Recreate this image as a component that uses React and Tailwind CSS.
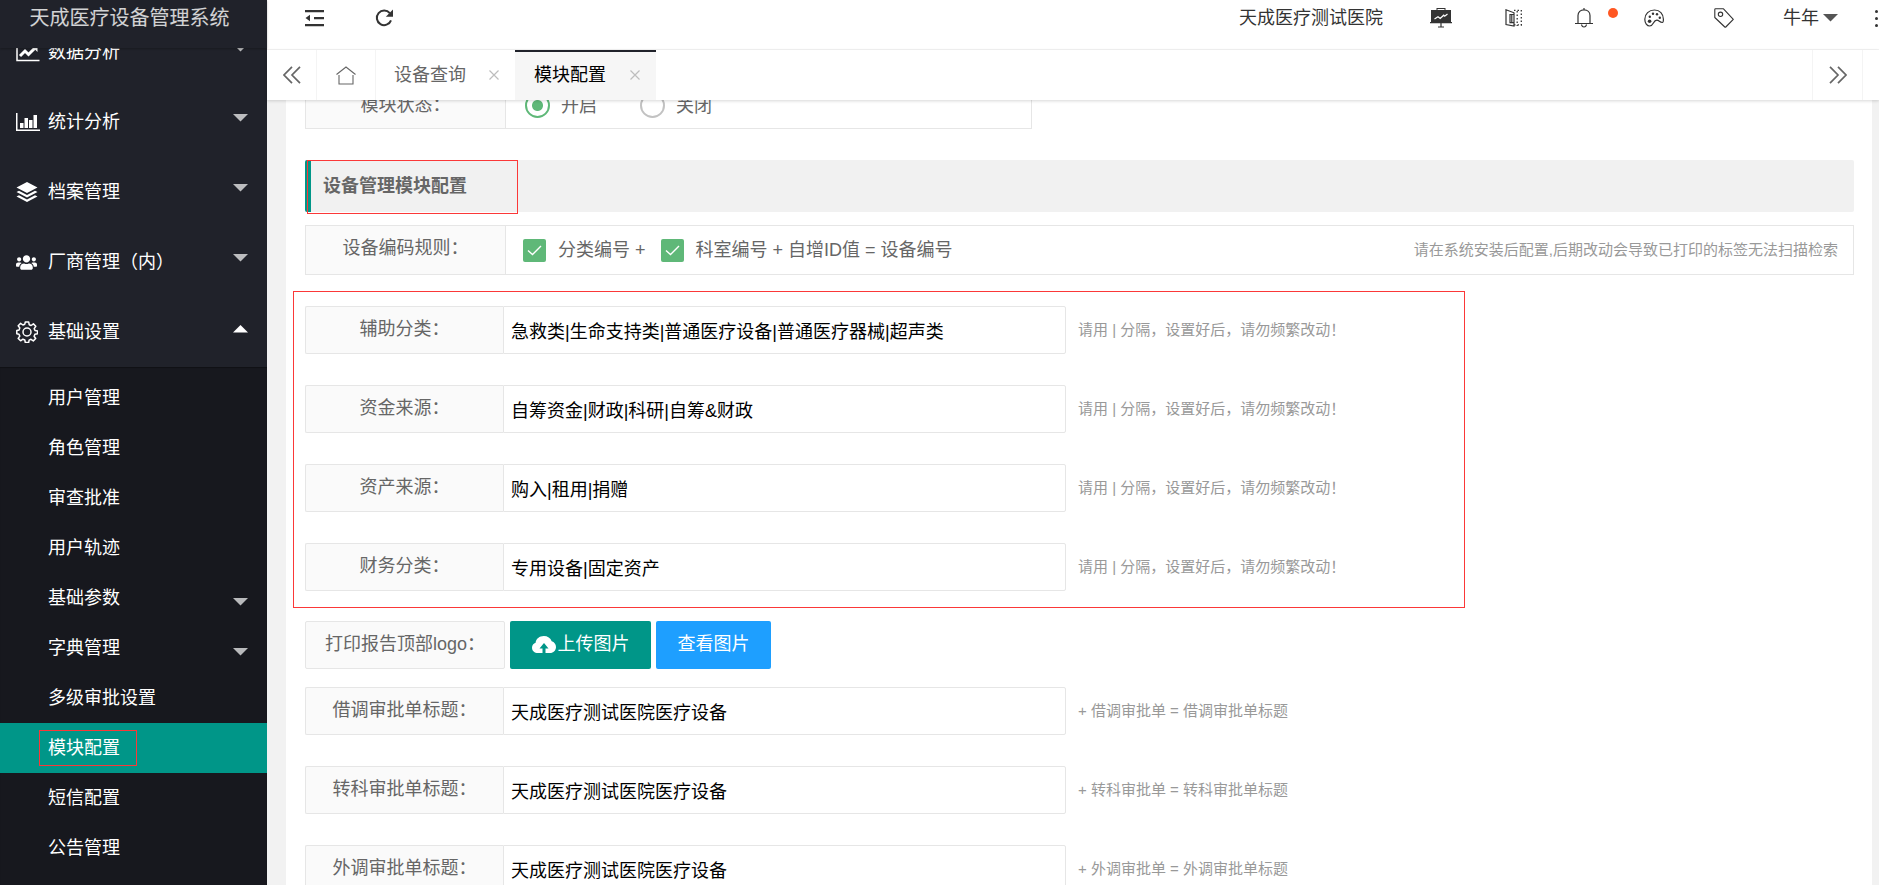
import { FaUsers } from "react-icons/fa";

const groups = ["数据分析", "统计分析", "档案管理", "厂商管理（内）", "基础设置"];

const subItems = [
  { name: "用户管理" },
  { name: "角色管理" },
  { name: "审查批准" },
  { name: "用户轨迹" },
  { name: "基础参数", more: true },
  { name: "字典管理", more: true },
  { name: "多级审批设置" },
  { name: "模块配置", active: true },
  { name: "短信配置" },
  { name: "公告管理" },
];

const splitHint = "请用 | 分隔，设置好后，请勿频繁改动！";
const categoryFields = [
  { id: "assist", label: "辅助分类：", value: "急救类|生命支持类|普通医疗设备|普通医疗器械|超声类" },
  { id: "fund", label: "资金来源：", value: "自筹资金|财政|科研|自筹&财政" },
  { id: "asset", label: "资产来源：", value: "购入|租用|捐赠" },
  { id: "finance", label: "财务分类：", value: "专用设备|固定资产" },
];
const titleFields = [
  { id: "lend", label: "借调审批单标题：", value: "天成医疗测试医院医疗设备", hint: "+ 借调审批单 = 借调审批单标题" },
  { id: "transfer", label: "转科审批单标题：", value: "天成医疗测试医院医疗设备", hint: "+ 转科审批单 = 转科审批单标题" },
  { id: "outer", label: "外调审批单标题：", value: "天成医疗测试医院医疗设备", hint: "+ 外调审批单 = 外调审批单标题" },
];

function GroupIcon({ index }) {
  if (index === 0)
    return (
      <svg width="24" height="20" viewBox="0 0 24 20" fill="none" stroke="currentColor">
        <path d="M1 1v17.500h22.500" strokeWidth="1.500" />
        <path d="M4 14l5-5 3.500 3.500L19 6" strokeWidth="3" />
        <path d="M15 3.500h6.500V10z" fill="currentColor" stroke="none" />
      </svg>
    );
  if (index === 1)
    return (
      <svg width="24" height="20" viewBox="0 0 24 20" fill="currentColor">
        <path d="M0 1h1.500v16.500H24V19H0zM4 11h3.500v5H4zM8.500 6h3.500v10H8.500zM13 8h3.500v8H13zM17.500 3H21v13h-3.500z" />
      </svg>
    );
  if (index === 2)
    return (
      <svg width="22" height="20" viewBox="0 0 22 20" fill="currentColor">
        <path d="M11 0l10.500 5.500L11 11 .5 5.500zM3 8.700l8 4.200 8-4.200 2.500 1.300L11 15.500.5 10zM3 13.200l8 4.200 8-4.200 2.500 1.300L11 20 .5 14.500z" />
      </svg>
    );
  if (index === 3) return <FaUsers size={21} />;
  return (
    <svg width="22" height="22" viewBox="0 0 22 22" fill="none" stroke="currentColor" strokeWidth="1.500">
      <circle cx="11" cy="11" r="4" />
      <path
        strokeLinejoin="round"
        d="M9.300 1h3.400l.5 2.700 1.900.8 2.300-1.600 2.400 2.400-1.600 2.300.8 1.900 2.500.4v2.900l-2.600.5-.8 1.900 1.600 2.300-2.400 2.400-2.300-1.600-1.900.8-.4 2.400H9.300l-.5-2.500-1.900-.8-2.300 1.600-2.400-2.400 1.600-2.300-.8-1.900L.8 12.700V9.400l2.300-.5.7-1.900-1.600-2.200 2.400-2.400 2.300 1.600 1.900-.8z"
      />
    </svg>
  );
}

function Caret({ up, className = "" }) {
  return (
    <svg width="15" height="8" viewBox="0 0 15 8" fill="currentColor" className={className}>
      <path d={up ? "M0 7.500h15L7.500 0z" : "M0 0h15L7.500 7.500z"} />
    </svg>
  );
}

function Chevrons({ right }) {
  return (
    <svg width="18" height="18" viewBox="0 0 18 18" fill="none" stroke="currentColor" strokeWidth="1.700">
      {right ? <path d="M1 .8L9 9l-8 8.200M9 .8L17 9l-8 8.200" /> : <path d="M9 .8L1 9l8 8.200M17 .8L9 9l8 8.200" />}
    </svg>
  );
}

function CloseIcon() {
  return (
    <svg width="10" height="10" viewBox="0 0 10 10" fill="none" stroke="#bdbdbd" strokeWidth="1.200">
      <path d="M.5.5l9 9M9.500.5l-9 9" />
    </svg>
  );
}

function Sidebar() {
  return (
    <aside className="flex w-[267px] shrink-0 flex-col bg-[#20222a] text-white">
      <div className="z-10 flex h-12 shrink-0 justify-center bg-[#20222a] pt-1 text-xl leading-7 text-white/80 shadow-[0_1px_2px_rgba(0,0,0,0.25)]">
        <span className="mr-2">天成医疗设备管理系统</span>
      </div>
      <nav className="min-h-0 flex-1 overflow-hidden">
        <ul className="-mt-[31px]">
          {groups.map((name, i) => (
            <li key={name}>
              <a href="#" className="flex h-[70px] items-center pr-[19px] pl-4">
                <span className="flex w-8 items-center">
                  <GroupIcon index={i} />
                </span>
                <span className="flex-1">{name}</span>
                <Caret up={i === 4} className={i === 4 ? "mb-[7px]" : "mb-[9px] text-white/70"} />
              </a>
            </li>
          ))}
        </ul>
        <ul className="bg-[#17181e] pt-1.5 pb-5 shadow-[inset_0_1px_1px_rgba(0,0,0,0.3)]">
          {subItems.map((item) => (
            <li key={item.name}>
              <a
                href="#"
                className={
                  "relative flex h-[50px] items-center pr-[19px] pl-12 " + (item.active ? "bg-[#009688]" : "")
                }
              >
                {item.active && (
                  <span className="absolute inset-y-[7px] left-[39px] w-[98px] border border-[#fb3838]" />
                )}
                <span className="flex-1">{item.name}</span>
                {item.more && <Caret className="mt-2 text-white/70" />}
              </a>
            </li>
          ))}
        </ul>
      </nav>
    </aside>
  );
}

function HeaderButton({ label, className, children }) {
  return (
    <button aria-label={label} className={"flex h-9 items-center justify-center " + className}>
      {children}
    </button>
  );
}

function TopBar() {
  return (
    <header className="flex h-[50px] items-start border-b border-[#f4f4f4] bg-white text-[#333]">
      <HeaderButton label="收起菜单" className="ml-[37px] w-5">
        <svg width="19" height="18" viewBox="0 0 19 18" fill="currentColor">
          <path d="M0 1h19v2.200H0zM9 8h10v2.200H9zM0 15h19v2.200H0zM5 5.800v6.400L.5 9z" />
        </svg>
      </HeaderButton>
      <HeaderButton label="刷新" className="ml-[50px] w-5">
        <svg width="18" height="18" viewBox="0 0 18 18" fill="none">
          <path d="M14.800 4.200A7.300 7.300 0 1 0 16 11.300" stroke="currentColor" strokeWidth="2" />
          <path d="M18 .6v7.200h-7.200z" fill="currentColor" />
        </svg>
      </HeaderButton>
      <div className="flex-1" />
      <a href="#" className="leading-9">
        天成医疗测试医院
      </a>
      <HeaderButton label="大屏" className="ml-[46px] w-6">
        <svg width="22" height="20" viewBox="0 0 22 20">
          <path
            d="M6.500 0h9v2H21v12h1v1.200H11.600V18.500H14v1H8v-1h2.400v-3.300H0V14h1V2h5.500z"
            fill="currentColor"
          />
          <path d="M7.500 1h7v1h-7z" fill="#fff" />
          <path d="M4.500 11l3.500-2.200 2.200 1.700 3.500-3.300 1 1L17.500 6" stroke="#fff" strokeWidth="1.200" fill="none" />
        </svg>
      </HeaderButton>
      <HeaderButton label="布局" className="ml-[49px] w-6">
        <svg width="18" height="18" viewBox="0 0 18 18" fill="none" stroke="currentColor" strokeWidth="1.200">
          <path d="M1 .8l8 3V17l-8-1.500zM9 5.500H5v8.200h4M6.800 5.500v8.200" />
          <path d="M12.200 2v15M16.300 1v16" strokeWidth="1.300" strokeDasharray="1.500 2" />
          <path d="M9 1.300h6M9 15.800h8" strokeDasharray="1.500 2" />
        </svg>
      </HeaderButton>
      <HeaderButton label="消息" className="relative ml-[46px] w-6">
        <svg width="18" height="20" viewBox="0 0 18 20" fill="none" stroke="currentColor" strokeWidth="1.200">
          <path d="M3 15V7.500C3 4 5.500 1.800 9 1.800S15 4 15 7.500V15M0 15.500h18M9 0v2M6.500 16.500c.3 1.600 1.200 2.500 2.500 2.500s2.200-.9 2.500-2.500" />
        </svg>
        <span className="absolute top-2 left-9 size-[10px] rounded-full bg-[#ff5722]" />
      </HeaderButton>
      <HeaderButton label="主题" className="ml-[46px] w-6">
        <svg width="20" height="18" viewBox="0 0 20 18" fill="none" stroke="currentColor" strokeWidth="1.200">
          <path d="M10.500 1C5 1 .8 5 .8 10.300c0 3.700 2.200 6.700 5 6.700 4 0 3.200-5.800 7-5.800 2.500 0 2.700 2.300 5.600 2.300.8 0 1-1.500 1-3.200C19.400 4.800 15.800 1 10.500 1z" />
          <g fill="currentColor" stroke="none">
            <circle cx="5.800" cy="7.700" r="1.200" />
            <circle cx="9" cy="4.800" r="1.200" />
            <circle cx="13" cy="5.200" r="1.200" />
            <circle cx="15.800" cy="8.700" r="1.200" />
            <circle cx="5.600" cy="12.300" r="1.800" />
          </g>
        </svg>
      </HeaderButton>
      <HeaderButton label="便签" className="ml-[46px] w-6">
        <svg width="20" height="20" viewBox="0 0 20 20" fill="none" stroke="currentColor" strokeWidth="1.100">
          <path d="M.8 1.500Q.8.800 1.500.8h8L19.300 11.300 11.800 19Q11.300 19.500 10.800 19L.8 9.500z" strokeLinejoin="round" />
          <circle cx="6.500" cy="6.300" r="2.200" />
        </svg>
      </HeaderButton>
      <button className="ml-[47px] flex h-9 items-center">
        牛年
        <Caret className="ml-1 text-[#555]" />
      </button>
      <button aria-label="更多" className="ml-[37px] flex h-9 w-[4px] flex-col items-start justify-center gap-1">
        <span className="size-[3px] rounded-full bg-[#333]" />
        <span className="size-[3px] rounded-full bg-[#333]" />
        <span className="size-[3px] rounded-full bg-[#333]" />
      </button>
    </header>
  );
}

function TabBar() {
  return (
    <div className="z-10 flex h-[50px] bg-white text-[#666] shadow-[0_1px_3px_rgba(0,0,0,0.16)]">
      <button aria-label="向左滚动" className="flex w-[50px] items-center justify-center border-r border-[#f4f4f4]">
        <Chevrons />
      </button>
      <button aria-label="首页" className="flex w-[59px] items-center justify-center border-r border-[#f4f4f4]">
        <svg width="20" height="19" viewBox="0 0 20 19" fill="none" stroke="currentColor" strokeWidth="1.100">
          <path d="M.5 8.500L10 1l9.500 7.500M3 9v9h14V9" />
        </svg>
      </button>
      <a href="#" className="flex w-[139px] items-center justify-between pr-4 pl-[18px]">
        设备查询
        <CloseIcon />
      </a>
      <a
        href="#"
        className="flex w-[141px] items-center justify-between border-t-2 border-[#20222a] bg-[#f6f6f6] pr-4 pb-0.5 pl-[19px] text-black"
      >
        模块配置
        <CloseIcon />
      </a>
      <div className="flex-1" />
      <button aria-label="向右滚动" className="flex w-[51px] items-center justify-center border-x border-[#f4f4f4]">
        <Chevrons right />
      </button>
      <div className="w-4" />
    </div>
  );
}

function Radio({ id, label, checked }) {
  return (
    <label htmlFor={id} className="flex items-center gap-[11px]">
      <input
        id={id}
        type="radio"
        name="status"
        defaultChecked={checked}
        className="size-[25px] appearance-none rounded-full border-2 border-[#c2c2c2] checked:border-[#5fb878] checked:bg-[radial-gradient(circle,#5fb878_5px,transparent_6px)]"
      />
      {label}
    </label>
  );
}

function Check({ id, label }) {
  return (
    <label htmlFor={id} className="flex items-center gap-3">
      <span className="relative flex size-[23px]">
        <input id={id} type="checkbox" defaultChecked className="size-full appearance-none rounded-xs bg-[#5fb878]" />
        <svg
          width="23"
          height="23"
          viewBox="0 0 23 23"
          fill="none"
          stroke="#fff"
          strokeWidth="1.400"
          className="pointer-events-none absolute inset-0"
        >
          <path d="M5 11.500l4.500 4L18 7" />
        </svg>
      </span>
      {label}
    </label>
  );
}

function Field({ field, hint }) {
  return (
    <div className="flex h-12 items-center">
      <label
        htmlFor={field.id}
        className="h-12 w-[198px] shrink-0 rounded-l-xs border border-r-0 border-[#e6e6e6] bg-[#fafafa] text-center leading-[44px]"
      >
        {field.label}
      </label>
      <input
        id={field.id}
        type="text"
        defaultValue={field.value}
        className="h-12 w-[563px] rounded-r-xs border border-[#e6e6e6] bg-white px-[7px] text-black outline-none"
      />
      <span className="ml-3 text-[15px] text-[#999]">{hint}</span>
    </div>
  );
}

function Content() {
  return (
    <main className="min-h-0 flex-1 overflow-hidden bg-[#f2f2f2] pr-[7px] pl-[19px]">
      <form className="-mt-[21px] bg-white pr-[18px] pb-8 pl-[19px] text-[#666]">
        <div className="flex h-[50px] w-[727px] border border-[#e6e6e6]">
          <span className="w-[200px] border-r border-[#e6e6e6] bg-[#fafafa] text-center leading-[50px]">模块状态：</span>
          <div className="flex items-center gap-[43px] pt-[3px] pl-[19px]">
            <Radio id="on" label="开启" checked />
            <Radio id="off" label="关闭" />
          </div>
        </div>

        <h2 className="relative mt-[31px] h-[52px] rounded-xs border-l-6 border-[#009688] bg-[#f1f1f1] pl-3 leading-[52px] font-bold">
          设备管理模块配置
          <span className="absolute top-0 -left-1 h-[54px] w-[211px] border border-[#fb3838]" />
        </h2>

        <div className="mt-[13px] flex h-[50px] items-center border border-[#e6e6e6]">
          <span className="h-12 w-[200px] border-r border-[#e6e6e6] bg-[#fafafa] text-center leading-[44px]">
            设备编码规则：
          </span>
          <div className="flex items-center gap-[15px] pl-[17px]">
            <Check id="by-category" label="分类编号 +" />
            <Check id="by-dept" label="科室编号 + 自增ID值 = 设备编号" />
          </div>
          <span className="ml-auto pr-[15px] text-[15px] text-[#999]">
            请在系统安装后配置,后期改动会导致已打印的标签无法扫描检索
          </span>
        </div>

        <div className="relative mt-[31px] flex flex-col gap-[31px]">
          <span className="pointer-events-none absolute -top-[15px] -bottom-[17px] -left-3 w-[1172px] border border-[#fb3838]" />
          {categoryFields.map((f) => (
            <Field key={f.id} field={f} hint={splitHint} />
          ))}
        </div>

        <div className="mt-[30px] flex gap-[5px]">
          <span className="h-12 w-[200px] rounded-xs border border-[#e6e6e6] bg-[#fafafa] text-center leading-[44px]">
            打印报告顶部logo：
          </span>
          <button
            type="button"
            className="flex h-12 w-[141px] items-center justify-center gap-0.5 rounded-xs bg-[#009688] pb-0.5 text-white"
          >
            <svg width="24" height="17" viewBox="0 0 24 17" fill="currentColor">
              <path
                fillRule="evenodd"
                d="M6 17C2.500 17 0 14.800 0 11.700c0-2.400 1.500-4.300 3.600-5C4 2.800 7.500 0 11.800 0c3.800 0 6.800 2 7.900 5.200C22.300 6 24 8.300 24 11c0 3.400-2.500 6-6 6h-4.500v-4.500h3L12 7l-4.500 5.500h3V17z"
              />
            </svg>
            上传图片
          </button>
          <button type="button" className="h-12 w-[115px] rounded-xs bg-[#1e9fff] pb-0.5 text-white">
            查看图片
          </button>
        </div>

        <div className="mt-[18px] flex flex-col gap-[31px]">
          {titleFields.map((f) => (
            <Field key={f.id} field={f} hint={f.hint} />
          ))}
        </div>
      </form>
    </main>
  );
}

export default function App() {
  return (
    <div className="flex h-screen overflow-hidden font-['Liberation_Sans','Noto_Sans_CJK_SC',sans-serif] text-lg">
      <Sidebar />
      <div className="flex min-w-0 flex-1 flex-col">
        <TopBar />
        <TabBar />
        <Content />
      </div>
    </div>
  );
}
